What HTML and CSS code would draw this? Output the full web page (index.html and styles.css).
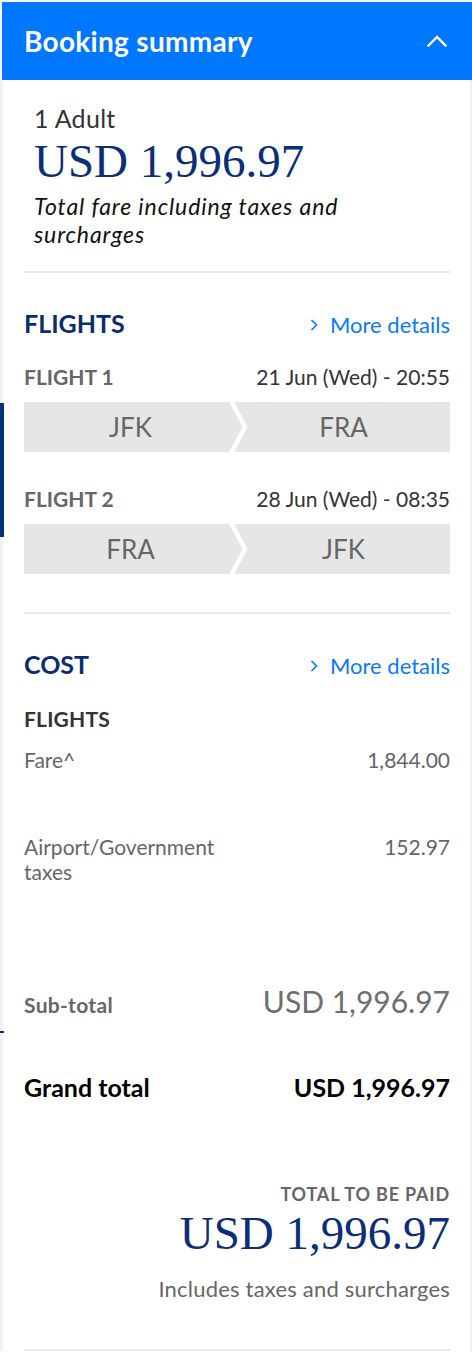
FILE: index.html
```html
<!DOCTYPE html>
<html lang="en">
<head>
<meta charset="utf-8">
<title>Booking summary</title>
<link rel="stylesheet" href="styles.css">
</head>
<body>
<div class="page">
  <span class="edge-mark edge-mark-flight"></span>
  <span class="edge-mark edge-mark-total"></span>

  <header class="summary-header">
    <h1 class="summary-title">Booking summary</h1>
    <button class="collapse-btn" type="button" aria-label="Collapse">
      <svg width="20" height="12" viewBox="0 0 20 12"><polyline points="1.5,10.5 10,2 18.5,10.5" fill="none" stroke="#ffffff" stroke-width="2.4" stroke-linecap="square"/></svg>
    </button>
  </header>

  <main class="summary-body">
    <section class="overview">
      <p class="pax">1 Adult</p>
      <p class="price">USD 1,996.97</p>
      <p class="price-note">Total fare including taxes and surcharges</p>
    </section>

    <section class="block">
      <div class="block-head">
        <h2 class="block-title">FLIGHTS</h2>
        <a class="more-link" href="#"><svg class="more-chev" width="8" height="12" viewBox="0 0 8 12"><polyline points="1.5,1 6.5,6 1.5,11" fill="none" stroke="#0a78ff" stroke-width="1.6"/></svg>More details</a>
      </div>

      <div class="flight flight-first">
        <div class="flight-head">
          <span class="flight-label">FLIGHT 1</span>
          <span class="flight-date">21 Jun (Wed) - 20:55</span>
        </div>
        <div class="route">
          <span class="route-city">JFK</span>
          <span class="route-city">FRA</span>
          <svg class="route-sep" width="20" height="50" viewBox="0 0 20 50"><polyline points="2,-1 16,25 2,51" fill="none" stroke="#ffffff" stroke-width="4.5"/></svg>
        </div>
      </div>

      <div class="flight">
        <div class="flight-head">
          <span class="flight-label">FLIGHT 2</span>
          <span class="flight-date">28 Jun (Wed) - 08:35</span>
        </div>
        <div class="route">
          <span class="route-city">FRA</span>
          <span class="route-city">JFK</span>
          <svg class="route-sep" width="20" height="50" viewBox="0 0 20 50"><polyline points="2,-1 16,25 2,51" fill="none" stroke="#ffffff" stroke-width="4.5"/></svg>
        </div>
      </div>
    </section>

    <section class="block block-cost">
      <div class="block-head">
        <h2 class="block-title">COST</h2>
        <a class="more-link" href="#"><svg class="more-chev" width="8" height="12" viewBox="0 0 8 12"><polyline points="1.5,1 6.5,6 1.5,11" fill="none" stroke="#0a78ff" stroke-width="1.6"/></svg>More details</a>
      </div>

      <h3 class="cost-sub">FLIGHTS</h3>
      <div class="cost-row cost-row-fare">
        <span class="cost-label">Fare^</span>
        <span class="cost-value">1,844.00</span>
      </div>
      <div class="cost-row cost-row-tax">
        <span class="cost-label">Airport/Government taxes</span>
        <span class="cost-value">152.97</span>
      </div>

      <div class="subtotal-row">
        <span class="subtotal-label">Sub-total</span>
        <span class="subtotal-value">USD 1,996.97</span>
      </div>

      <div class="grand-row">
        <span>Grand total</span>
        <span>USD 1,996.97</span>
      </div>

      <div class="pay">
        <p class="pay-label">TOTAL TO BE PAID</p>
        <p class="price pay-price">USD 1,996.97</p>
        <p class="pay-note">Includes taxes and surcharges</p>
      </div>
    </section>
  </main>
</div>
</body>
</html>
```

FILE: styles.css
```css
* {
  box-sizing: border-box;
}

html,
body {
  margin: 0;
  padding: 0;
  background: #ffffff;
}

body {
  font-family: Lato, "Open Sans", sans-serif;
  color: #333333;
}

p,
h1,
h2,
h3 {
  margin: 0;
}

.page {
  position: relative;
  padding-top: 2px;
  width: 472px;
}

.edge-mark {
  position: absolute;
  left: 0;
  width: 4px;
  background: #00337a;
  z-index: 2;
}

.edge-mark-flight {
  top: 403px;
  height: 134px;
}

.edge-mark-total {
  top: 1031px;
  height: 2px;
}

/* Header */
.summary-header {
  margin-left: 2px;
  height: 78px;
  background: #0077ff;
  display: flex;
  align-items: center;
  justify-content: space-between;
  padding: 0 24px 0 22px;
}

.summary-title {
  font-size: 28px;
  line-height: 34px;
  font-weight: 700;
  color: #ffffff;
  letter-spacing: 0.3px;
}

.collapse-btn {
  border: 0;
  background: transparent;
  padding: 0;
  width: 22px;
  height: 14px;
  display: flex;
  align-items: center;
  justify-content: center;
}

/* Body */
.summary-body {
  display: block;
  border-left: 3px solid #f1f1f1;
  border-right: 2px solid #f1f1f1;
  padding: 0 20px 0 21px;
}

.overview {
  padding: 23px 10px 23px 10px;
  border-bottom: 2px solid #e8e8e8;
}

.pax {
  font-size: 25px;
  line-height: 30px;
  color: #333333;
  letter-spacing: 0.3px;
}

.price {
  font-family: "Liberation Serif", "Times New Roman", serif;
  font-size: 47px;
  line-height: 50px;
  color: #0b2e78;
  margin-top: 3px;
}

.price-note {
  margin-top: 6px;
  max-width: 380px;
  font-size: 23px;
  line-height: 28px;
  font-style: italic;
  color: #111111;
  letter-spacing: 0.9px;
}

.block {
  padding: 35px 0 38px;
  border-bottom: 2px solid #e8e8e8;
}

.block-head {
  display: flex;
  justify-content: space-between;
  align-items: center;
  height: 30px;
}

.block-title {
  font-size: 25px;
  line-height: 30px;
  font-weight: 700;
  color: #0a2d6e;
}

.more-link {
  display: inline-flex;
  align-items: center;
  padding-top: 3px;
  font-size: 22px;
  line-height: 30px;
  color: #0a78ff;
  text-decoration: none;
}

.more-chev {
  margin-right: 12px;
  margin-top: 1px;
}

.flight {
  margin-top: 34px;
}

.flight-first {
  margin-top: 26px;
}

.flight-head {
  display: flex;
  justify-content: space-between;
  align-items: baseline;
  line-height: 26px;
}

.flight-label {
  font-size: 21px;
  font-weight: 700;
  color: #666666;
}

.flight-date {
  font-size: 21px;
  color: #333333;
}

.route {
  position: relative;
  margin-top: 12px;
  height: 50px;
  display: flex;
  background: #e6e6e6;
}

.route-city {
  flex: 1 1 50%;
  text-align: center;
  font-size: 26px;
  line-height: 50px;
  color: #666666;
}

.route-sep {
  position: absolute;
  top: 0;
  left: calc(50% - 8px);
}

/* Cost */
.block-cost {
  padding-bottom: 47px;
}

.cost-sub {
  margin-top: 27px;
  font-size: 21px;
  line-height: 26px;
  font-weight: 700;
  color: #333333;
  letter-spacing: 0.2px;
}

.cost-row {
  display: flex;
  justify-content: space-between;
  align-items: flex-start;
  font-size: 21px;
  line-height: 25px;
  color: #666666;
}

.cost-row-fare {
  margin-top: 15px;
}

.cost-row-tax {
  margin-top: 62px;
}

.cost-label {
  flex: 0 1 50%;
}

.cost-value {
  text-align: right;
}

.subtotal-row {
  margin-top: 99px;
  display: flex;
  justify-content: space-between;
  align-items: baseline;
}

.subtotal-label {
  font-size: 21px;
  line-height: 30px;
  font-weight: 700;
  color: #666666;
  letter-spacing: 0.3px;
}

.subtotal-value {
  font-size: 30px;
  line-height: 36px;
  color: #6e6e6e;
}

.grand-row {
  margin-top: 52px;
  display: flex;
  justify-content: space-between;
  align-items: baseline;
  font-size: 25px;
  line-height: 30px;
  font-weight: 700;
  color: #000000;
}

.pay {
  margin-top: 81px;
  text-align: right;
}

.pay-label {
  font-size: 18px;
  line-height: 22px;
  font-weight: 700;
  color: #666666;
  letter-spacing: 0.8px;
}

.pay-price {
  margin-top: 3px;
}

.pay-note {
  margin-top: 18px;
  font-size: 22px;
  line-height: 26px;
  color: #666666;
  letter-spacing: 0.2px;
}
```
